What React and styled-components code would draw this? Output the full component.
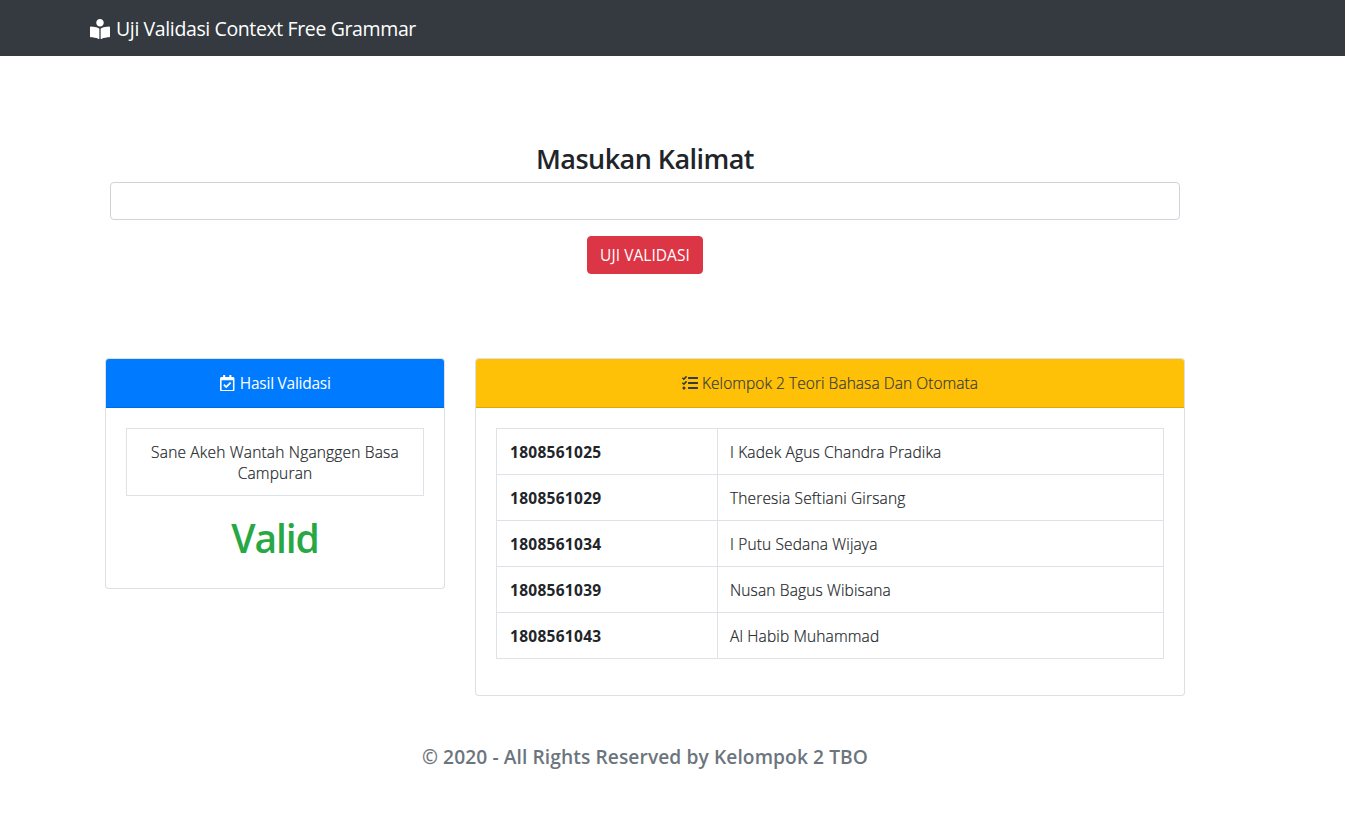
import React from "react";
import styled, { createGlobalStyle } from "styled-components";
import { FaBookReader, FaRegCalendarCheck, FaTasks } from "react-icons/fa";

const GlobalStyle = createGlobalStyle`
  *, *::before, *::after { box-sizing: border-box; }
  body {
    margin: 0;
    background: #fff;
    color: #212529;
    font-family: "Segoe UI", "Open Sans", "Noto Sans", sans-serif;
    font-size: 16px;
    line-height: 1.5;
  }
`;

const Navbar = styled.nav`
  height: 56px;
  background: #343a40;
  display: flex;
  align-items: center;
  padding-left: 90px;
`;

const Brand = styled.div`
  display: flex;
  align-items: center;
  gap: 6px;
  color: #fff;
  font-size: 19.5px;
  line-height: 30px;
  letter-spacing: -0.38px;
  white-space: nowrap;
  svg { font-size: 20px; margin-top: 1px; }
  span { padding-top: 2px; }
`;

const Page = styled.main`
  width: 1080px;
  margin-left: 105px;
`;

const SentenceForm = styled.section`
  display: flex;
  flex-direction: column;
  align-items: center;
  padding: 86px 5px 0;
`;

const Title = styled.h3`
  margin: 0 0 6px;
  font-size: 27px;
  line-height: 34px;
  font-weight: 600;
  letter-spacing: -0.55px;
`;

const SentenceInput = styled.input`
  width: 100%;
  height: 38px;
  border: 1px solid #ced4da;
  border-radius: 4px;
  padding: 6px 12px;
  font: inherit;
`;

const SubmitButton = styled.button`
  width: 116px;
  height: 38px;
  margin-top: 16px;
  padding: 2px 0 0;
  border: 1px solid #dc3545;
  border-radius: 4px;
  background: #dc3545;
  color: #fff;
  font: inherit;
  font-size: 15.5px;
  white-space: nowrap;
  letter-spacing: 0.05px;
`;

const Cards = styled.section`
  display: grid;
  grid-template-columns: 340px 710px;
  gap: 30px;
  align-items: start;
  margin-top: 84px;
`;

const Card = styled.article`
  border: 1px solid rgba(0, 0, 0, 0.125);
  border-radius: 4px;
  background: #fff;
`;

const CardHeader = styled.header`
  display: flex;
  align-items: center;
  justify-content: center;
  gap: 4px;
  height: 49px;
  border-bottom: 1px solid rgba(0, 0, 0, 0.125);
  border-radius: 3px 3px 0 0;
  background: ${(p) => p.$bg};
  color: ${(p) => p.$color};
  font-size: 15.5px;
  font-weight: ${(p) => p.$weight};
  letter-spacing: ${(p) => p.$track};
  -webkit-text-stroke: ${(p) => (p.$weight < 400 ? "0.2px" : "0")};
  white-space: nowrap;
  svg { font-size: ${(p) => p.$icon}; }
  span { padding-top: 1px; }
`;

const CardBody = styled.div`
  padding: 20px;
`;

const Sentence = styled.div`
  height: 68px;
  padding: 13px 12px 11px;
  border: 1px solid #dee2e6;
  font-size: 15.5px;
  line-height: 21px;
  font-weight: 300;
  letter-spacing: 0.18px;
  -webkit-text-stroke: 0.2px;
  text-align: center;
`;

const Verdict = styled.h1`
  margin: 16px 0 8px;
  padding-top: 2px;
  height: 48px;
  color: #28a745;
  font-size: 39px;
  line-height: 48px;
  font-weight: 600;
  letter-spacing: -1.1px;
  text-align: center;
`;

const Members = styled.table`
  width: 668px;
  margin-bottom: 16px;
  border-collapse: collapse;
  table-layout: fixed;
`;

const Nim = styled.th`
  width: 221px;
  height: 46px;
  padding: 2px 12px 0 13px;
  border: 1px solid #dee2e6;
  text-align: left;
  font-size: 15.5px;
  font-weight: 700;
  letter-spacing: 0.28px;
  line-height: 21px;
`;

const Name = styled.td`
  height: 46px;
  padding: 2px 12px 0;
  border: 1px solid #dee2e6;
  font-size: 15.5px;
  font-weight: 300;
  letter-spacing: 0.14px;
  -webkit-text-stroke: 0.2px;
  line-height: 21px;
`;

const Footer = styled.footer`
  margin-top: 49px;
  color: #6c757d;
  font-size: 19.2px;
  line-height: 24px;
  font-weight: 600;
  letter-spacing: 0.09px;
  text-align: center;
`;

const members = [
  ["1808561025", "I Kadek Agus Chandra Pradika"],
  ["1808561029", "Theresia Seftiani Girsang"],
  ["1808561034", "I Putu Sedana Wijaya"],
  ["1808561039", "Nusan Bagus Wibisana"],
  ["1808561043", "Al Habib Muhammad"],
];

export default function App() {
  return (
    <>
      <GlobalStyle />
      <Navbar>
        <Brand>
          <FaBookReader />
          <span>Uji Validasi Context Free Grammar</span>
        </Brand>
      </Navbar>
      <Page>
        <SentenceForm>
          <Title>Masukan Kalimat</Title>
          <SentenceInput aria-label="Masukan Kalimat" />
          <SubmitButton type="button">UJI VALIDASI</SubmitButton>
        </SentenceForm>
        <Cards>
          <Card>
            <CardHeader $bg="#007bff" $color="#fff" $weight={400} $track="-0.25px" $icon="16.5px">
              <FaRegCalendarCheck />
              <span>Hasil Validasi</span>
            </CardHeader>
            <CardBody>
              <Sentence>Sane Akeh Wantah Nganggen Basa Campuran</Sentence>
              <Verdict>Valid</Verdict>
            </CardBody>
          </Card>
          <Card>
            <CardHeader $bg="#ffc107" $color="#343a40" $weight={300} $track="0.05px" $icon="16px">
              <FaTasks />
              <span>Kelompok 2 Teori Bahasa Dan Otomata</span>
            </CardHeader>
            <CardBody>
              <Members>
                <tbody>
                  {members.map(([nim, name]) => (
                    <tr key={nim}>
                      <Nim scope="row">{nim}</Nim>
                      <Name>{name}</Name>
                    </tr>
                  ))}
                </tbody>
              </Members>
            </CardBody>
          </Card>
        </Cards>
        <Footer>© 2020 - All Rights Reserved by Kelompok 2 TBO</Footer>
      </Page>
    </>
  );
}
